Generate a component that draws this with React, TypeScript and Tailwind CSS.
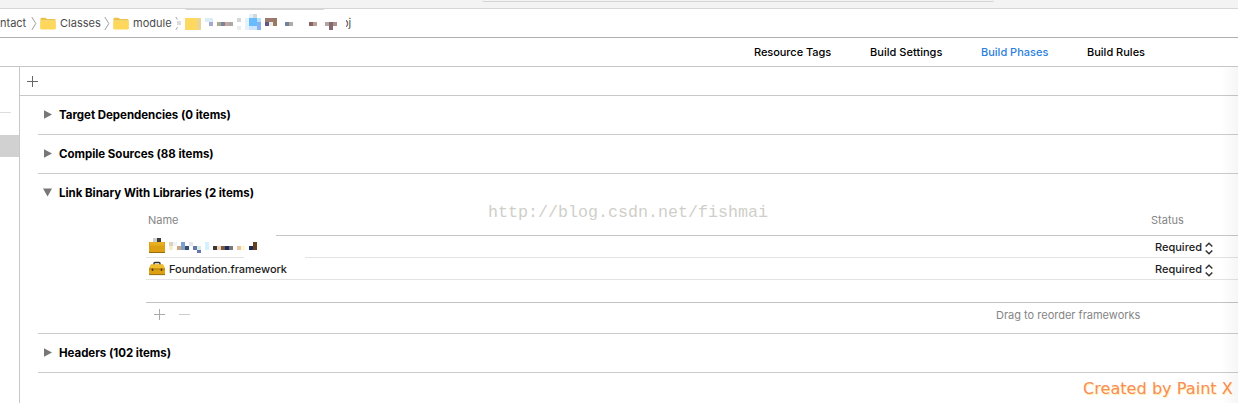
import type { ReactNode } from "react";

type Cell = [number, number, number, number, string];

const PATH_CELLS: Cell[] = [
  [1, 13, 4, 4, "#dcdcdc"], [9, 10, 12, 12, "#ffd95f"], [21, 10, 4, 12, "#e9d595"],
  [29, 10, 8, 4, "#dcecf5"], [33, 14, 4, 4, "#a5a9cf"],
  [41, 14, 4, 4, "#b0a593"], [45, 14, 4, 4, "#74899e"], [49, 14, 4, 4, "#c9a6a0"], [53, 14, 4, 4, "#a6aaaa"],
  [61, 10, 4, 4, "#d6d6d6"], [61, 18, 4, 4, "#ededed"],
  [69, 10, 4, 12, "#e4f2fc"], [73, 6, 4, 4, "#e3f0f8"], [77, 6, 4, 4, "#d0d8dc"],
  [73, 10, 8, 8, "#68bbff"], [81, 10, 4, 4, "#b8e0ff"], [81, 14, 4, 8, "#87b4ec"], [73, 18, 8, 4, "#cfe5ff"],
  [89, 10, 12, 4, "#9c7a70"], [89, 14, 4, 4, "#5e5a88"], [93, 14, 4, 4, "#f0ebe6"], [97, 10, 4, 8, "#967a63"],
  [109, 14, 4, 4, "#71849f"], [113, 14, 4, 4, "#b0aaa8"],
  [133, 14, 4, 4, "#826666"], [137, 14, 4, 4, "#b9a092"],
  [149, 14, 4, 4, "#b0a8a0"], [153, 14, 4, 8, "#856870"], [157, 14, 4, 4, "#a8928b"],
];

const NAME_CELLS: Cell[] = [
  [0, 4, 4, 4, "#dfd2bd"], [4, 4, 4, 4, "#eef4fa"], [0, 8, 4, 4, "#f9ebcb"],
  [8, 8, 4, 4, "#cfa57b"], [12, 4, 4, 8, "#7ba0d0"], [16, 8, 4, 4, "#35506b"], [20, 4, 4, 4, "#e4e7ea"],
  [24, 8, 4, 4, "#6976ad"], [28, 8, 4, 4, "#d5ecdf"], [28, 12, 4, 3, "#6976ad"],
  [36, 4, 4, 8, "#d3f1ff"], [44, 8, 4, 4, "#3a3a3a"], [48, 8, 4, 4, "#f1d1ad"], [52, 8, 4, 4, "#7b5c42"],
  [56, 8, 4, 4, "#1d2c5c"], [60, 8, 4, 4, "#777777"], [68, 8, 4, 4, "#e8c5a0"], [72, 8, 4, 4, "#fff6d8"],
  [80, 8, 4, 4, "#1d2c5c"], [84, 4, 4, 8, "#63411f"],
];

function Mosaic({ cells, width, height }: { cells: Cell[]; width: number; height: number }) {
  return (
    <svg width={width} height={height} className="shrink-0" shapeRendering="crispEdges" aria-hidden>
      {cells.map(([x, y, w, h, fill], i) => (
        <rect key={i} x={x} y={y} width={w} height={h} fill={fill} />
      ))}
    </svg>
  );
}

function Folder() {
  return (
    <svg width="16" height="13" viewBox="0 0 16 13" className="shrink-0">
      <path d="M.5 2Q.5.7 1.5.7H5.5L7 2H14.6Q15.5 2 15.5 3V12H.5Z" fill="#eac249" />
      <path d="M.5 4H15.5V11.7Q15.5 12.5 14.6 12.5H1.4Q.5 12.5.5 11.7Z" fill="#ffd75b" />
      <path d="M.5 3.7H15.5" stroke="#fbe69a" strokeWidth=".7" />
    </svg>
  );
}

function Separator({ cut = false }: { cut?: boolean }) {
  return (
    <svg width="6" height="15" viewBox="0 0 6 15" className="shrink-0" fill="none" stroke="#a0a0a0">
      <path d="M.8 1 4.8 7.5.8 14" strokeDasharray={cut ? "3 9" : undefined} />
    </svg>
  );
}

function Toolbox({ covered = false }: { covered?: boolean }) {
  return (
    <svg width="18" height="16" viewBox="0 0 18 16" className="shrink-0">
      {covered ? (
        <>
          <path d="M5 0h4v4H5z" fill="#cfcfcf" />
          <path d="M9 0h4v4H9z" fill="#423d36" />
          <path d="M1 4h16v11H1z" fill="#dda013" />
          <path d="M2 4h14v3.500H2z" fill="#e7b023" />
          <path d="M1 14.5h16" stroke="#966c14" />
        </>
      ) : (
        <>
          <path d="M6 4V2.5Q6 1.5 7 1.5h4q1 0 1 1V4" fill="none" stroke="#353026" strokeWidth="1.4" />
          <path d="M3 3.5h12l2 4v6.5H1V7.500Z" fill="#dda013" />
          <path d="M3 3.500h12l1.600 3.500H1.400Z" fill="#efbd2d" />
          <path d="M1 8.200h16" stroke="#a67b19" strokeWidth=".8" />
          <path d="M4.500 7.500v2.500M13.500 7.500v2.500" stroke="#4e3b17" strokeWidth="1.500" />
          <path d="M1 13.600h16" stroke="#9a6e13" />
        </>
      )}
    </svg>
  );
}

function Plus({ className }: { className: string }) {
  return (
    <svg width="11" height="11" viewBox="0 0 11 11" className={className} stroke="currentColor">
      <path d="M0 5.500h11M5.500 0v11" />
    </svg>
  );
}

function Section({ title, open = false, children }: { title: string; open?: boolean; children?: ReactNode }) {
  return (
    <section className="border-b border-[#cbcbcb]">
      <h2 className="flex h-[38px] items-center pl-[5px] text-[11.5px] font-bold tracking-[-0.03px] text-black">
        <svg width="9" height="9" viewBox="0 0 9 9" className="mr-[7px] mb-[1px] shrink-0" fill="#777">
          <path d={open ? "M0 .5H9L4.500 8.500Z" : "M1 .2 9 4.500 1 8.800Z"} />
        </svg>
        <span className="pt-[2px] whitespace-nowrap">{title}</span>
      </h2>
      {children}
    </section>
  );
}

function Required() {
  return (
    <div className="flex w-[84px] items-center">
      <span className="w-[50px] pt-[2px] pl-[1px] font-medium text-[#1b1b1b]">Required</span>
      <svg width="8" height="13" viewBox="0 0 8 13" className="mt-[3px] ml-[1px]" fill="none" stroke="#333" strokeWidth="1.500">
        <path d="M.7 4.500 4 1.200 7.300 4.500M.7 8.500 4 11.800 7.300 8.500" />
      </svg>
    </div>
  );
}

export default function App() {
  return (
    <div className="relative flex h-[403px] w-[1238px] flex-col overflow-hidden bg-white font-['Inter','Liberation_Sans',sans-serif] text-[11px]">
      <header className="h-[9px] shrink-0 border-b border-[#d6d6d6] bg-[#f3f3f3]">
        <div className="ml-[482px] h-[2px] w-[512px] rounded-b-sm border-b border-[#d4d4d4]" />
      </header>
      <nav className="flex h-[29px] shrink-0 items-center border-b border-[#b0b0b0] text-[#4b4b4b]">
        <span className="w-[31px] pt-[1px]">ntact</span>
        <Separator />
        <span className="ml-[3px]"><Folder /></span>
        <span className="ml-[4px] w-[44px] pt-[1px]">Classes</span>
        <Separator />
        <span className="ml-[3px]"><Folder /></span>
        <span className="ml-[4px] w-[42px] pt-[1px]">module</span>
        <div className="-mr-[5px]"><Separator cut /></div>
        <div className="-mt-[3px]"><Mosaic cells={PATH_CELLS} width={166} height={28} /></div>
        <span className="relative pt-[1px] before:absolute before:inset-y-0 before:left-0 before:w-[4px] before:bg-white">oj</span>
      </nav>
      <div className="flex h-[29px] shrink-0 items-center border-b border-[#c6c6c6] pl-[754px] font-medium text-black">
        <span className="w-[116px] tracking-[-0.05px]">Resource Tags</span>
        <span className="w-[111px] tracking-[0.03px]">Build Settings</span>
        <span className="w-[106px] text-[#2a80dc]">Build Phases</span>
        <span>Build Rules</span>
      </div>
      <div className="flex min-h-0 grow">
        <aside className="w-[20px] shrink-0 border-r border-[#c8c8c8] pt-[45px]">
          <div className="h-px w-[11px] bg-[#ddd]" />
          <div className="mt-[22px] h-[22px] bg-[#d1d1d1]" />
        </aside>
        <main className="min-w-0 grow">
          <div className="flex h-[29px] items-center border-b border-[#c8c8c8] pl-[7px]">
            <Plus className="text-[#666]" />
          </div>
          <div className="pl-[18px]">
            <Section title="Target Dependencies (0 items)" />
            <Section title="Compile Sources (88 items)" />
            <Section title="Link Binary With Libraries (2 items)" open>
              <div className="ml-[108px] h-[121px]">
                <div className="flex h-[23px] items-start justify-between pl-[2px] text-[#858585]">
                  <span>Name</span>
                  <span className="w-[88px] pl-[1px]">Status</span>
                </div>
                <div className="ml-[130px] h-px bg-[#c6c6c6]" />
                <div className="flex h-[21px] items-center justify-between pl-[2px]">
                  <div className="flex items-center pb-[2px]">
                    <Toolbox covered />
                    <div className="ml-[3px]"><Mosaic cells={NAME_CELLS} width={90} height={16} /></div>
                  </div>
                  <Required />
                </div>
                <div className="flex h-px justify-between">
                  <div className="w-[98px] bg-[#e3e3e3]" />
                  <div className="w-[933px] bg-[#e3e3e3]" />
                </div>
                <div className="flex h-[22px] items-center justify-between border-b border-[#e3e3e3] pl-[2px]">
                  <div className="flex items-center text-[#1b1b1b]">
                    <Toolbox />
                    <span className="ml-[3px] pt-[2px] font-medium tracking-[-0.05px]">Foundation.framework</span>
                  </div>
                  <Required />
                </div>
                <div className="h-[23px] border-b border-[#c3c3c3]" />
                <div className="flex h-[23px] items-center pl-[8px]">
                  <Plus className="text-[#aaa]" />
                  <div className="ml-[14px] h-px w-[11px] bg-[#ccc]" />
                  <span className="ml-auto w-[242px] pt-[1px] text-[#858585]">Drag to reorder frameworks</span>
                </div>
              </div>
            </Section>
            <Section title="Headers (102 items)" />
          </div>
        </main>
      </div>
      <div className="pointer-events-none absolute top-[8px] left-[185px] h-[2px] w-[140px] rounded-b-full bg-[#d6d6d6]" />
      <div className="pointer-events-none absolute top-[67px] right-0 h-[336px] w-[18px] bg-gradient-to-r from-transparent to-black/[0.035]" />
      <div className="absolute top-[202px] left-[488px] font-['Liberation_Mono',monospace] text-[16.67px] leading-[22px] text-[#cfcfc9]">http://blog.csdn.net/fishmai</div>
      <div className="absolute top-[379px] left-[1083px] font-['DejaVu_Sans',sans-serif] text-[16px] leading-[20px] tracking-[0.06px] whitespace-nowrap text-[#f98b61] [text-shadow:1px_1px_0_#fff2a0]">Created by Paint X</div>
    </div>
  );
}
